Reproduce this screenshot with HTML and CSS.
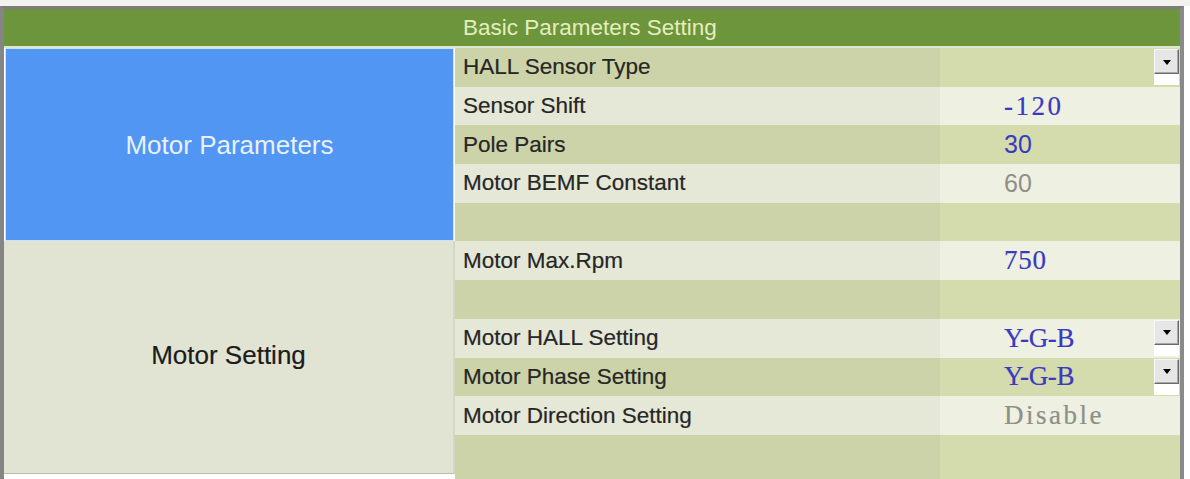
FILE: index.html
```html
<!DOCTYPE html>
<html lang="en">
<head>
<meta charset="utf-8">
<title>Basic Parameters Setting</title>
<link rel="stylesheet" href="styles.css">
</head>
<body>
<div class="topstrip"></div>
<div class="frame">
  <div class="title">
    <div class="title-spacer"></div>
    <div class="title-text">Basic Parameters Setting</div>
  </div>
  <div class="body">
    <div class="groups">
      <div class="group group-motor">Motor Parameters</div>
      <div class="group group-setting">Motor Setting</div>
    </div>
    <div class="rows">
      <div class="row dark">
        <div class="label">HALL Sensor Type</div>
        <div class="value"><span class="val"></span><div class="select"><div class="select-btn"><span class="tri"></span></div></div></div>
      </div>
      <div class="row light">
        <div class="label">Sensor Shift</div>
        <div class="value"><span class="val serif loose blue">-120</span></div>
      </div>
      <div class="row dark">
        <div class="label">Pole Pairs</div>
        <div class="value"><span class="val sans blue">30</span></div>
      </div>
      <div class="row light">
        <div class="label">Motor BEMF Constant</div>
        <div class="value"><span class="val sans gray">60</span></div>
      </div>
      <div class="row dark">
        <div class="label"></div>
        <div class="value"></div>
      </div>
      <div class="row light">
        <div class="label">Motor Max.Rpm</div>
        <div class="value"><span class="val serif mid blue">750</span></div>
      </div>
      <div class="row dark">
        <div class="label"></div>
        <div class="value"></div>
      </div>
      <div class="row light">
        <div class="label">Motor HALL Setting</div>
        <div class="value"><span class="val serif tight blue">Y-G-B</span><div class="select"><div class="select-btn"><span class="tri"></span></div></div></div>
      </div>
      <div class="row dark">
        <div class="label">Motor Phase Setting</div>
        <div class="value"><span class="val serif tight blue">Y-G-B</span><div class="select"><div class="select-btn"><span class="tri"></span></div></div></div>
      </div>
      <div class="row light">
        <div class="label">Motor Direction Setting</div>
        <div class="value"><span class="val serif loose gray">Disable</span></div>
      </div>
      <div class="row dark last">
        <div class="label"></div>
        <div class="value"></div>
      </div>
    </div>
  </div>
</div>
</body>
</html>
```
FILE: styles.css
```css
html, body {
  margin: 0;
  padding: 0;
  background: #ffffff;
  height: 479px;
  overflow: hidden;
  font-family: "Liberation Sans", Arial, sans-serif;
}

.topstrip {
  height: 6px;
  background: #f3f2ee;
}

.frame {
  width: 1176px;
  border-left: 4px solid #858585;
  border-right: 4px solid #8a8a8a;
  border-top: 3px solid #7d7d7d;
}

.title {
  display: grid;
  grid-template-columns: 451px 1fr;
  height: 37px;
  background: #6d953b;
  border-bottom: 2px solid #dde6d2;
}

.title-text {
  padding-left: 8px;
  display: flex;
  align-items: center;
  font-size: 22.5px;
  color: #e4eebe;
}

.body {
  display: grid;
  grid-template-columns: 451px 1fr;
  align-items: start;
}

.groups {
  display: flex;
  flex-direction: column;
  height: 426px;
}

.group {
  display: flex;
  align-items: center;
  justify-content: center;
  font-size: 26px;
  box-sizing: border-box;
}

.group-motor {
  flex: 0 0 193px;
  background: #5296f3;
  border: 1px solid #cfe1f6;
  margin-left: 1px;
  margin-right: 1px;
  color: #e8f1fa;
  padding-top: 2px;
}

.group-setting {
  flex: 1 1 auto;
  background: #e1e3d3;
  color: #1c1c1c;
  border-right: 2px solid #d3d8c0;
  border-bottom: 1px solid #b9bcb0;
  padding-bottom: 4px;
  -webkit-text-stroke: 0.2px #1c1c1c;
}

.rows {
  display: flex;
  flex-direction: column;
}

.row {
  display: grid;
  grid-template-columns: 485px 1fr;
  height: 38.7px;
}

.row.last {
  height: 48px;
}

.label {
  display: flex;
  align-items: center;
  padding-left: 8px;
  font-size: 22.5px;
  color: #262626;
  -webkit-text-stroke: 0.2px #262626;
}

.value {
  display: flex;
  align-items: center;
}

.row.dark .label { background: #cdd3a8; }
.row.dark .value { background: #d4dbac; }
.row.light .label { background: #e5e7d7; }
.row.light .value { background: #eef1e2; }

.val {
  margin-left: 64px;
}

.serif {
  font-family: "Liberation Serif", "Times New Roman", serif;
  font-size: 27px;
  -webkit-text-stroke: 0.2px currentColor;
}

.serif.loose { letter-spacing: 2.5px; }
.serif.mid { letter-spacing: 0.8px; }
.serif.tight { letter-spacing: -0.4px; }

.sans {
  font-family: "Liberation Sans", Arial, sans-serif;
  font-size: 25px;
}

.blue { color: #3a3ac0; }
.gray { color: #8f8f88; }

.select {
  margin-left: auto;
  margin-right: 1px;
  align-self: flex-start;
  margin-top: 1px;
  width: 25px;
  height: 36px;
  background: #ffffff;
}

.select-btn {
  width: 25px;
  height: 25px;
  box-sizing: border-box;
  background: #e6e6e6;
  border: 1px solid;
  border-color: #f8f8f8 #6a6a6a #6a6a6a #f8f8f8;
  box-shadow: inset -1px -1px 0 #a8a8a8;
  display: flex;
  align-items: center;
  justify-content: center;
}

.tri {
  width: 0;
  height: 0;
  border-left: 4px solid transparent;
  border-right: 4px solid transparent;
  border-top: 5px solid #000000;
  margin-top: 1px;
}
```
